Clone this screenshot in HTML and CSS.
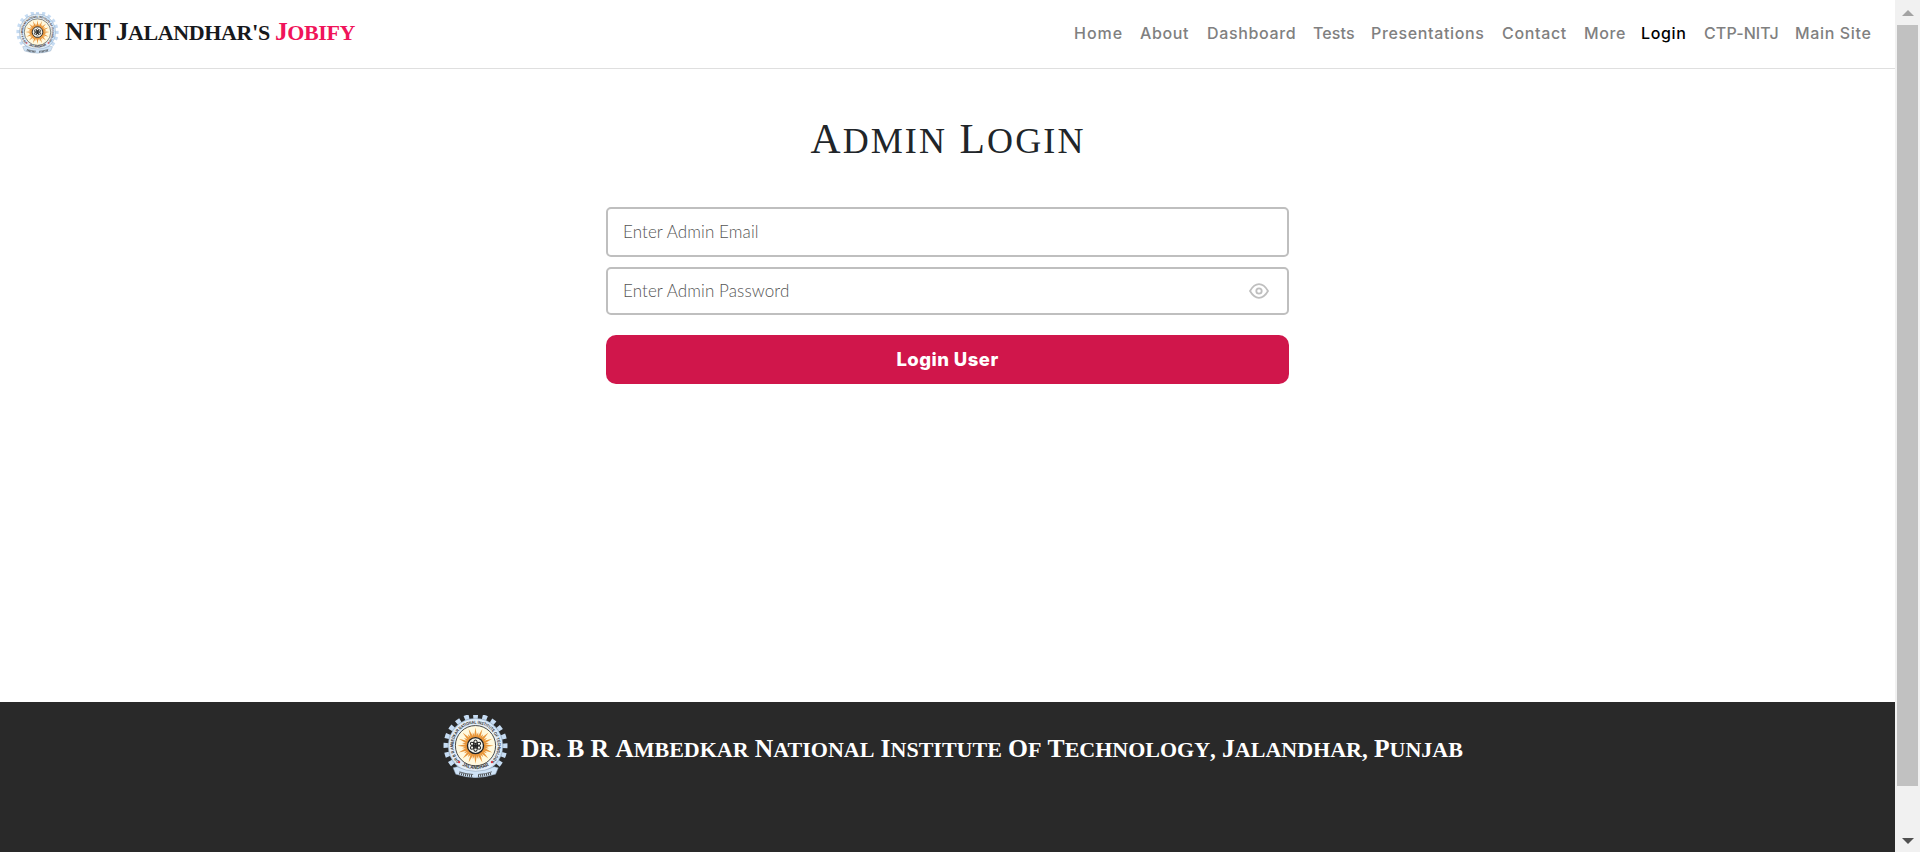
FILE: index.html
```
<!DOCTYPE html>
<html lang="en">
<head>
<meta charset="utf-8">
<title>Admin Login</title>
<link rel="stylesheet" href="styles.css">
</head>
<body>
<svg class="defs" width="0" height="0">
  <defs>
    <g id="ray"><path d="M92 68L97 37L102 68Z"/><path d="M92 68L97 50L102 68Z" transform="rotate(11.25 97 91)"/></g>
    <g id="ray2"><use href="#ray"/><use href="#ray" transform="rotate(22.5 97 91)"/></g>
    <g id="ray4"><use href="#ray2"/><use href="#ray2" transform="rotate(45 97 91)"/></g>
    <g id="ray8"><use href="#ray4"/><use href="#ray4" transform="rotate(90 97 91)"/></g>
  </defs>
  <symbol id="crest" viewBox="0 0 194 190">
    <circle cx="97" cy="91" r="87" fill="none" stroke="#c6dcf3" stroke-width="17" stroke-dasharray="14 13.332" transform="rotate(-94.5 97 91)"/>
    <circle cx="97" cy="91" r="82" fill="#c6dcf3" stroke="#5f7080" stroke-width="1"/>
    <circle cx="97" cy="91" r="78" fill="#e4eef8"/>
    <path id="ring" d="M49 137A66 66 0 1 1 145 137" fill="none"/>
    <text class="ring-text"><textPath href="#ring" textLength="308" lengthAdjust="spacingAndGlyphs">DR B R AMBEDKAR NATIONAL INSTITUTE OF TECHNOLOGY</textPath></text>
    <circle cx="97" cy="91" r="60" fill="#fff9df" stroke="#2b2b2b" stroke-width="2.5"/>
    <g fill="#e8953a"><use href="#ray8"/><use href="#ray8" transform="rotate(180 97 91)"/></g>
    <circle cx="97" cy="91" r="24" fill="#f4f4ec" stroke="#222" stroke-width="4"/>
    <g fill="none" stroke="#222" stroke-width="3">
      <ellipse cx="97" cy="91" rx="6" ry="17"/>
      <ellipse cx="97" cy="91" rx="6" ry="17" transform="rotate(60 97 91)"/>
      <ellipse cx="97" cy="91" rx="6" ry="17" transform="rotate(120 97 91)"/>
    </g>
    <circle cx="97" cy="91" r="5" fill="#222"/>
    <circle cx="48" cy="140" r="3.5" fill="#d8333d"/>
    <circle cx="146" cy="140" r="3.5" fill="#d8333d"/>
    <path id="town" d="M57 150Q97 172 139 150" fill="none"/>
    <text class="ring-text town-text"><textPath href="#town" textLength="84" lengthAdjust="spacingAndGlyphs">JALANDHAR</textPath></text>
    <path d="M30 157L42 154Q97 181 153 154L165 157L157 176Q97 196 38 176Z" fill="#cfe3f7" stroke="#8195a8" stroke-width="1.5"/>
    <path d="M49 169Q68 176 90 177M105 177Q128 176 146 169" fill="none" stroke="#333" stroke-width="2"/>
    <path d="M49 173Q68 180 90 181M105 181Q128 180 146 173" fill="none" stroke="#333" stroke-width="7" stroke-dasharray="2.5 3.5"/>
  </symbol>
</svg>
<div class="window">
  <div class="page">
    <header class="navbar">
      <a class="brand"><svg class="brand-logo"><use href="#crest"/></svg><span class="caps brand-name"><span class="full">NIT</span> <span class="word">Jalandhar<span class="mark">'</span>s</span> <span class="word accent">Jobify</span></span></a>
      <nav class="links">
        <a class="wide">Home</a><a>About</a><a>Dashboard</a><a class="tight">Tests</a><a>Presentations</a><a>Contact</a><a>More</a><a class="active">Login</a><a class="tight">CTP-NITJ</a><a>Main Site</a>
      </nav>
    </header>
    <main class="content">
      <h1 class="caps title"><span class="word">Admin</span> <span class="word">Login</span></h1>
      <form class="form">
        <div class="field email"><input type="text" placeholder="Enter Admin Email"></div>
        <div class="field password"><input type="password" placeholder="Enter Admin Password">
          <svg class="eye" viewBox="0 0 20 16"><path d="M1 8Q5 1.2 10 1.2T19 8Q15 14.8 10 14.8T1 8Z"/><circle cx="10" cy="8" r="2.7"/></svg>
        </div>
        <button class="submit" type="button">Login User</button>
      </form>
    </main>
    <footer class="footer">
      <svg class="footer-logo"><use href="#crest"/></svg>
      <div class="caps footer-name"><span class="word">Dr<span class="mark">.</span></span> <span class="word">B</span> <span class="word">R</span> <span class="word">Ambedkar</span> <span class="word">National</span> <span class="word">Institute</span> <span class="word">Of</span> <span class="word">Technology<span class="mark">,</span></span> <span class="word">Jalandhar<span class="mark">,</span></span> <span class="word">Punjab</span></div>
    </footer>
  </div>
  <div class="scrollbar">
    <svg class="arrow" viewBox="0 0 12 6"><path d="M0 6L6 0L12 6Z" fill="#a3a3a3"/></svg>
    <div class="thumb"></div>
    <svg class="arrow" viewBox="0 0 12 6"><path d="M0 0L6 6L12 0Z" fill="#505050"/></svg>
  </div>
</div>
</body>
</html>
```
FILE: styles.css
```
* { box-sizing: border-box; }
body { margin: 0; overflow: hidden; background: #fff; }
.defs { display: block; }
.ring-text { font: 700 13px "Liberation Sans", sans-serif; fill: #2b2b2b; }
.town-text { font-size: 14px; }
.window { display: flex; height: 852px; }
.page { width: 1895px; display: flex; flex-direction: column; }

.caps { font-family: "Liberation Serif", serif; font-variant-caps: small-caps; white-space: nowrap; display: flex; align-items: baseline; justify-content: space-between; }
.word { display: inline-block; }
.word::first-letter { font-size: .8em; }
.full { font-size: .8em; }
.mark { font-size: .72em; }

.navbar { height: 69px; border-bottom: 1px solid #dfdfdf; display: flex; justify-content: space-between; padding-left: 15px; }
.brand { display: flex; }
.brand-logo { width: 43px; height: 42px; margin: 12px 0 0 1px; }
.brand-name { font-size: 32px; line-height: 40px; font-weight: 700; color: #17191c; width: 290px; margin: 9px 0 0 6px; letter-spacing: -.4px; }
.brand-name .full { letter-spacing: 0; }
.accent { color: #f0145a; }
.links { display: grid; grid-template-columns: 66px 67px 106px 58px 131px 82px 57px 63px 91px 77px; margin-right: 23px; font: 500 16px/24px Inter, sans-serif; letter-spacing: .65px; color: #808080; padding-top: 21px; white-space: nowrap; }
.wide { letter-spacing: 1px; }
.tight { letter-spacing: .1px; }
.active { color: #000; }

.content { flex: 1; display: flex; flex-direction: column; align-items: center; }
.title { margin: 35px 0 0; width: 276px; padding-left: 1px; font-size: 52px; line-height: 64px; font-weight: 400; color: #212529; letter-spacing: 2.1px; }
.form { width: 683px; margin-top: 36px; display: flex; flex-direction: column; }
.field { border: 2px solid #bfbfbf; border-radius: 5px; display: flex; align-items: center; padding: 0 15px; }
.email { height: 50px; }
.password { height: 48px; margin-top: 10px; }
.field input { flex: 1; border: 0; outline: 0; padding: 0 0 1px; background: none; font: 300 17px/24px Lato, sans-serif; letter-spacing: .1px; }
.field input::placeholder { color: #555; }
.eye { width: 20px; height: 16px; fill: none; stroke: #bfbfbf; stroke-width: 1.8; margin-right: 3px; }
.submit { margin-top: 20px; height: 49px; border: 0; border-radius: 10px; background: #d0164b; color: #fff; font: 800 18.5px/24px Inter, sans-serif; letter-spacing: .45px; padding: 0 0 2px; }

.footer { height: 150px; background: #292929; display: flex; align-items: flex-start; padding: 13px 0 0 443px; }
.footer-logo { width: 65px; height: 64px; }
.footer-name { font-size: 32px; line-height: 40px; font-weight: 700; color: #fff; width: 942px; margin: 11px 0 0 13px; }

.scrollbar { width: 25px; background: #f1f1f1; display: flex; flex-direction: column; align-items: center; padding: 10px 0 8px; }
.arrow { width: 12px; height: 6px; }
.thumb { width: 21px; height: 761px; background: #c1c1c1; margin: 9px 0 auto; }
```
